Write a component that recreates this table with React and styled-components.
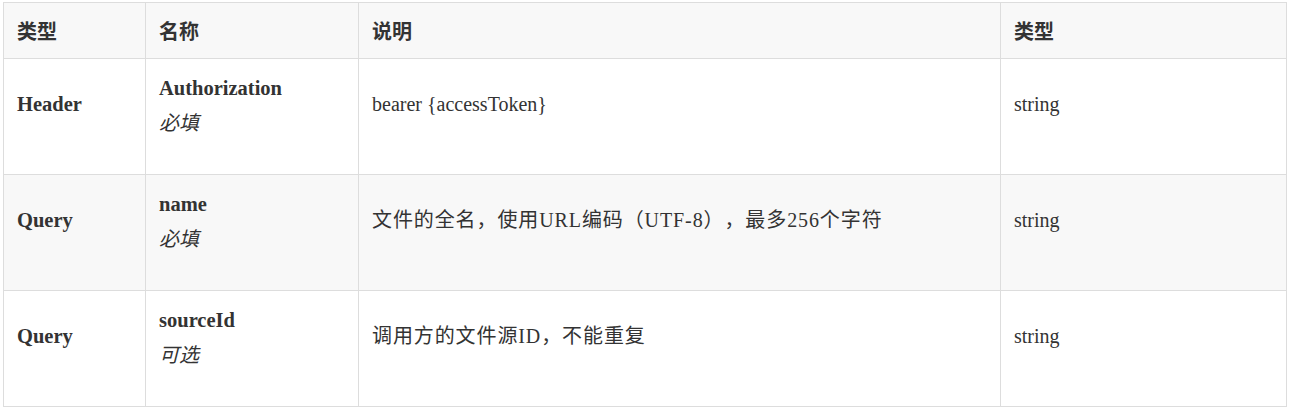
import React from "react";
import styled, { createGlobalStyle } from "styled-components";

const GlobalStyle = createGlobalStyle`
  html, body {
    margin: 0;
    padding: 0;
    background: #ffffff;
  }
  body {
    font-family: "Liberation Serif", "Noto Sans CJK SC", serif;
    color: #333333;
    text-spacing-trim: space-all;
  }
`;

const rows = [
  { kind: "Header", name: "Authorization", req: "必填", desc: "bearer {accessToken}", cjk: false, type: "string" },
  { kind: "Query", name: "name", req: "必填", desc: "文件的全名，使用URL编码（UTF-8），最多256个字符", cjk: true, type: "string" },
  { kind: "Query", name: "sourceId", req: "可选", desc: "调用方的文件源ID，不能重复", cjk: true, type: "string" },
];

const App = () => {
  return (
    <>
      <GlobalStyle />
      <S.Page>
        <S.Table>
          <colgroup>
            <col style={{ width: 142 }} />
            <col style={{ width: 213 }} />
            <col style={{ width: 642 }} />
            <col style={{ width: 286 }} />
          </colgroup>
          <thead>
            <S.HeadRow>
              <S.Th>类型</S.Th>
              <S.Th>名称</S.Th>
              <S.Th>说明</S.Th>
              <S.Th>类型</S.Th>
            </S.HeadRow>
          </thead>
          <tbody>
            {rows.map((r, i) => (
              <S.Row key={i} $striped={i % 2 === 1}>
                <S.Td>
                  <S.Strong>{r.kind}</S.Strong>
                </S.Td>
                <S.Td>
                  <S.Strong>{r.name}</S.Strong>
                  <S.Required>{r.req}</S.Required>
                </S.Td>
                <S.Td $cjk={r.cjk}>{r.desc}</S.Td>
                <S.Td>{r.type}</S.Td>
              </S.Row>
            ))}
          </tbody>
        </S.Table>
      </S.Page>
    </>
  );
};

const S = {
  Page: styled.div`
    padding: 2px 7px 0 3px;
  `,
  Table: styled.table`
    width: 1283px;
    border-collapse: collapse;
    table-layout: fixed;
    border: 1px solid #dddddd;
  `,
  HeadRow: styled.tr`
    height: 56px;
    background-color: #f8f8f8;
  `,
  Th: styled.th`
    border: 1px solid #dddddd;
    padding: 0 13px;
    text-align: left;
    vertical-align: middle;
    font-family: "Noto Sans CJK SC", sans-serif;
    font-weight: 700;
    font-size: 20px;
    color: #333333;
  `,
  Row: styled.tr`
    height: 116px;
    background-color: ${(p) => (p.$striped ? "#f8f8f8" : "#ffffff")};
  `,
  Td: styled.td`
    border: 1px solid #dddddd;
    padding: 0 13px 24px 13px;
    vertical-align: middle;
    font-size: 20px;
    line-height: 33px;
    letter-spacing: ${(p) => (p.$cjk ? "0.9px" : "0")};
    color: #333333;
  `,
  Strong: styled.strong`
    display: block;
    font-weight: 700;
    font-size: 20.5px;
    color: #333333;
  `,
  Required: styled.em`
    display: block;
    font-family: "Noto Sans CJK SC", sans-serif;
    font-style: italic;
    font-size: 20px;
  `,
};

export default App;
